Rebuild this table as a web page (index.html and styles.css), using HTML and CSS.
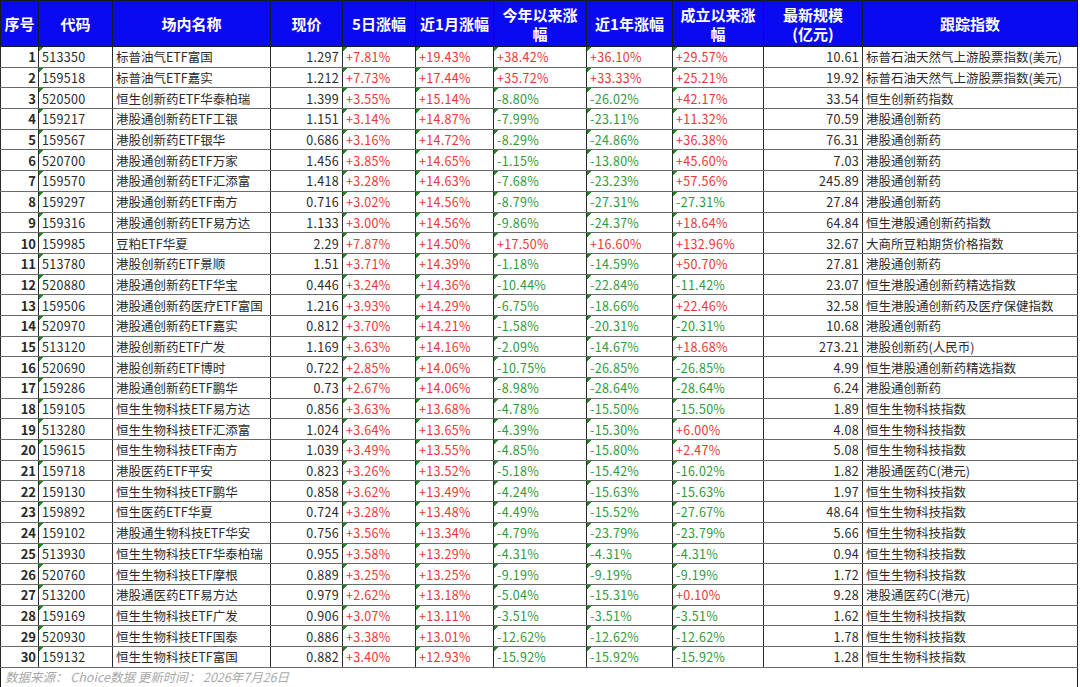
FILE: index.html
```html
<!DOCTYPE html>
<html lang="zh-CN">
<head>
<meta charset="utf-8">
<title>ETF涨幅排行</title>
<link rel="stylesheet" href="styles.css">
</head>
<body>
<table class="sheet">
<colgroup>
<col class="c-no"><col class="c-code"><col class="c-name"><col class="c-price"><col class="c-d5"><col class="c-m1"><col class="c-ytd"><col class="c-y1"><col class="c-all"><col class="c-size"><col class="c-idx">
</colgroup>
<thead>
<tr class="head">
<th>序号</th><th>代码</th><th>场内名称</th><th>现价</th><th>5日涨幅</th><th>近1月涨幅</th><th>今年以来涨<br>幅</th><th>近1年涨幅</th><th>成立以来涨<br>幅</th><th>最新规模<br>(亿元)</th><th>跟踪指数</th>
</tr>
</thead>
<tbody>
<tr><td class="no">1</td><td class="tx t">513350</td><td class="tx">标普油气ETF富国</td><td class="num">1.297</td><td class="t up">+7.81%</td><td class="t up">+19.43%</td><td class="t up">+38.42%</td><td class="t up">+36.10%</td><td class="t up">+29.57%</td><td class="num">10.61</td><td class="tx">标普石油天然气上游股票指数(美元)</td></tr>
<tr><td class="no">2</td><td class="tx t">159518</td><td class="tx">标普油气ETF嘉实</td><td class="num">1.212</td><td class="t up">+7.73%</td><td class="t up">+17.44%</td><td class="t up">+35.72%</td><td class="t up">+33.33%</td><td class="t up">+25.21%</td><td class="num">19.92</td><td class="tx">标普石油天然气上游股票指数(美元)</td></tr>
<tr><td class="no">3</td><td class="tx t">520500</td><td class="tx">恒生创新药ETF华泰柏瑞</td><td class="num">1.399</td><td class="t up">+3.55%</td><td class="t up">+15.14%</td><td class="t dn">-8.80%</td><td class="t dn">-26.02%</td><td class="t up">+42.17%</td><td class="num">33.54</td><td class="tx">恒生创新药指数</td></tr>
<tr><td class="no">4</td><td class="tx t">159217</td><td class="tx">港股通创新药ETF工银</td><td class="num">1.151</td><td class="t up">+3.14%</td><td class="t up">+14.87%</td><td class="t dn">-7.99%</td><td class="t dn">-23.11%</td><td class="t up">+11.32%</td><td class="num">70.59</td><td class="tx">港股通创新药</td></tr>
<tr><td class="no">5</td><td class="tx t">159567</td><td class="tx">港股创新药ETF银华</td><td class="num">0.686</td><td class="t up">+3.16%</td><td class="t up">+14.72%</td><td class="t dn">-8.29%</td><td class="t dn">-24.86%</td><td class="t up">+36.38%</td><td class="num">76.31</td><td class="tx">港股通创新药</td></tr>
<tr><td class="no">6</td><td class="tx t">520700</td><td class="tx">港股通创新药ETF万家</td><td class="num">1.456</td><td class="t up">+3.85%</td><td class="t up">+14.65%</td><td class="t dn">-1.15%</td><td class="t dn">-13.80%</td><td class="t up">+45.60%</td><td class="num">7.03</td><td class="tx">港股通创新药</td></tr>
<tr><td class="no">7</td><td class="tx t">159570</td><td class="tx">港股通创新药ETF汇添富</td><td class="num">1.418</td><td class="t up">+3.28%</td><td class="t up">+14.63%</td><td class="t dn">-7.68%</td><td class="t dn">-23.23%</td><td class="t up">+57.56%</td><td class="num">245.89</td><td class="tx">港股通创新药</td></tr>
<tr><td class="no">8</td><td class="tx t">159297</td><td class="tx">港股通创新药ETF南方</td><td class="num">0.716</td><td class="t up">+3.02%</td><td class="t up">+14.56%</td><td class="t dn">-8.79%</td><td class="t dn">-27.31%</td><td class="t dn">-27.31%</td><td class="num">27.84</td><td class="tx">港股通创新药</td></tr>
<tr><td class="no">9</td><td class="tx t">159316</td><td class="tx">港股通创新药ETF易方达</td><td class="num">1.133</td><td class="t up">+3.00%</td><td class="t up">+14.56%</td><td class="t dn">-9.86%</td><td class="t dn">-24.37%</td><td class="t up">+18.64%</td><td class="num">64.84</td><td class="tx">恒生港股通创新药指数</td></tr>
<tr><td class="no">10</td><td class="tx t">159985</td><td class="tx">豆粕ETF华夏</td><td class="num">2.29</td><td class="t up">+7.87%</td><td class="t up">+14.50%</td><td class="t up">+17.50%</td><td class="t up">+16.60%</td><td class="t up">+132.96%</td><td class="num">32.67</td><td class="tx">大商所豆粕期货价格指数</td></tr>
<tr><td class="no">11</td><td class="tx t">513780</td><td class="tx">港股创新药ETF景顺</td><td class="num">1.51</td><td class="t up">+3.71%</td><td class="t up">+14.39%</td><td class="t dn">-1.18%</td><td class="t dn">-14.59%</td><td class="t up">+50.70%</td><td class="num">27.81</td><td class="tx">港股通创新药</td></tr>
<tr><td class="no">12</td><td class="tx t">520880</td><td class="tx">港股通创新药ETF华宝</td><td class="num">0.446</td><td class="t up">+3.24%</td><td class="t up">+14.36%</td><td class="t dn">-10.44%</td><td class="t dn">-22.84%</td><td class="t dn">-11.42%</td><td class="num">23.07</td><td class="tx">恒生港股通创新药精选指数</td></tr>
<tr><td class="no">13</td><td class="tx t">159506</td><td class="tx">港股通创新药医疗ETF富国</td><td class="num">1.216</td><td class="t up">+3.93%</td><td class="t up">+14.29%</td><td class="t dn">-6.75%</td><td class="t dn">-18.66%</td><td class="t up">+22.46%</td><td class="num">32.58</td><td class="tx">恒生港股通创新药及医疗保健指数</td></tr>
<tr><td class="no">14</td><td class="tx t">520970</td><td class="tx">港股通创新药ETF嘉实</td><td class="num">0.812</td><td class="t up">+3.70%</td><td class="t up">+14.21%</td><td class="t dn">-1.58%</td><td class="t dn">-20.31%</td><td class="t dn">-20.31%</td><td class="num">10.68</td><td class="tx">港股通创新药</td></tr>
<tr><td class="no">15</td><td class="tx t">513120</td><td class="tx">港股创新药ETF广发</td><td class="num">1.169</td><td class="t up">+3.63%</td><td class="t up">+14.16%</td><td class="t dn">-2.09%</td><td class="t dn">-14.67%</td><td class="t up">+18.68%</td><td class="num">273.21</td><td class="tx">港股创新药(人民币)</td></tr>
<tr><td class="no">16</td><td class="tx t">520690</td><td class="tx">港股创新药ETF博时</td><td class="num">0.722</td><td class="t up">+2.85%</td><td class="t up">+14.06%</td><td class="t dn">-10.75%</td><td class="t dn">-26.85%</td><td class="t dn">-26.85%</td><td class="num">4.99</td><td class="tx">恒生港股通创新药精选指数</td></tr>
<tr><td class="no">17</td><td class="tx t">159286</td><td class="tx">港股通创新药ETF鹏华</td><td class="num">0.73</td><td class="t up">+2.67%</td><td class="t up">+14.06%</td><td class="t dn">-8.98%</td><td class="t dn">-28.64%</td><td class="t dn">-28.64%</td><td class="num">6.24</td><td class="tx">港股通创新药</td></tr>
<tr><td class="no">18</td><td class="tx t">159105</td><td class="tx">恒生生物科技ETF易方达</td><td class="num">0.856</td><td class="t up">+3.63%</td><td class="t up">+13.68%</td><td class="t dn">-4.78%</td><td class="t dn">-15.50%</td><td class="t dn">-15.50%</td><td class="num">1.89</td><td class="tx">恒生生物科技指数</td></tr>
<tr><td class="no">19</td><td class="tx t">513280</td><td class="tx">恒生生物科技ETF汇添富</td><td class="num">1.024</td><td class="t up">+3.64%</td><td class="t up">+13.65%</td><td class="t dn">-4.39%</td><td class="t dn">-15.30%</td><td class="t up">+6.00%</td><td class="num">4.08</td><td class="tx">恒生生物科技指数</td></tr>
<tr><td class="no">20</td><td class="tx t">159615</td><td class="tx">恒生生物科技ETF南方</td><td class="num">1.039</td><td class="t up">+3.49%</td><td class="t up">+13.55%</td><td class="t dn">-4.85%</td><td class="t dn">-15.80%</td><td class="t up">+2.47%</td><td class="num">5.08</td><td class="tx">恒生生物科技指数</td></tr>
<tr><td class="no">21</td><td class="tx t">159718</td><td class="tx">港股医药ETF平安</td><td class="num">0.823</td><td class="t up">+3.26%</td><td class="t up">+13.52%</td><td class="t dn">-5.18%</td><td class="t dn">-15.42%</td><td class="t dn">-16.02%</td><td class="num">1.82</td><td class="tx">港股通医药C(港元)</td></tr>
<tr><td class="no">22</td><td class="tx t">159130</td><td class="tx">恒生生物科技ETF鹏华</td><td class="num">0.858</td><td class="t up">+3.62%</td><td class="t up">+13.49%</td><td class="t dn">-4.24%</td><td class="t dn">-15.63%</td><td class="t dn">-15.63%</td><td class="num">1.97</td><td class="tx">恒生生物科技指数</td></tr>
<tr><td class="no">23</td><td class="tx t">159892</td><td class="tx">恒生医药ETF华夏</td><td class="num">0.724</td><td class="t up">+3.28%</td><td class="t up">+13.48%</td><td class="t dn">-4.49%</td><td class="t dn">-15.52%</td><td class="t dn">-27.67%</td><td class="num">48.64</td><td class="tx">恒生生物科技指数</td></tr>
<tr><td class="no">24</td><td class="tx t">159102</td><td class="tx">港股通生物科技ETF华安</td><td class="num">0.756</td><td class="t up">+3.56%</td><td class="t up">+13.34%</td><td class="t dn">-4.79%</td><td class="t dn">-23.79%</td><td class="t dn">-23.79%</td><td class="num">5.66</td><td class="tx">恒生生物科技指数</td></tr>
<tr><td class="no">25</td><td class="tx t">513930</td><td class="tx">恒生生物科技ETF华泰柏瑞</td><td class="num">0.955</td><td class="t up">+3.58%</td><td class="t up">+13.29%</td><td class="t dn">-4.31%</td><td class="t dn">-4.31%</td><td class="t dn">-4.31%</td><td class="num">0.94</td><td class="tx">恒生生物科技指数</td></tr>
<tr><td class="no">26</td><td class="tx t">520760</td><td class="tx">恒生生物科技ETF摩根</td><td class="num">0.889</td><td class="t up">+3.25%</td><td class="t up">+13.25%</td><td class="t dn">-9.19%</td><td class="t dn">-9.19%</td><td class="t dn">-9.19%</td><td class="num">1.72</td><td class="tx">恒生生物科技指数</td></tr>
<tr><td class="no">27</td><td class="tx t">513200</td><td class="tx">港股通医药ETF易方达</td><td class="num">0.979</td><td class="t up">+2.62%</td><td class="t up">+13.18%</td><td class="t dn">-5.04%</td><td class="t dn">-15.31%</td><td class="t up">+0.10%</td><td class="num">9.28</td><td class="tx">港股通医药C(港元)</td></tr>
<tr><td class="no">28</td><td class="tx t">159169</td><td class="tx">恒生生物科技ETF广发</td><td class="num">0.906</td><td class="t up">+3.07%</td><td class="t up">+13.11%</td><td class="t dn">-3.51%</td><td class="t dn">-3.51%</td><td class="t dn">-3.51%</td><td class="num">1.62</td><td class="tx">恒生生物科技指数</td></tr>
<tr><td class="no">29</td><td class="tx t">520930</td><td class="tx">恒生生物科技ETF国泰</td><td class="num">0.886</td><td class="t up">+3.38%</td><td class="t up">+13.01%</td><td class="t dn">-12.62%</td><td class="t dn">-12.62%</td><td class="t dn">-12.62%</td><td class="num">1.78</td><td class="tx">恒生生物科技指数</td></tr>
<tr><td class="no">30</td><td class="tx t">159132</td><td class="tx">恒生生物科技ETF富国</td><td class="num">0.882</td><td class="t up">+3.40%</td><td class="t up">+12.93%</td><td class="t dn">-15.92%</td><td class="t dn">-15.92%</td><td class="t dn">-15.92%</td><td class="num">1.28</td><td class="tx">恒生生物科技指数</td></tr>
</tbody>
<tfoot>
<tr><td class="foot" colspan="11">数据来源： Choice数据 更新时间： 2026年7月26日</td></tr>
</tfoot>
</table>
</body>
</html>
```

FILE: styles.css
```css
html, body {
  margin: 0;
  padding: 0;
  background: #ffffff;
}

.sheet {
  border-collapse: collapse;
  table-layout: fixed;
  width: 1077px;
  font-family: "Noto Sans CJK SC", "Microsoft YaHei", sans-serif;
  font-size: 12.5px;
  color: #2a2a2a;
}

.c-no { width: 38px; }
.c-code { width: 74px; }
.c-name { width: 158px; }
.c-price { width: 72px; }
.c-d5 { width: 73px; }
.c-m1 { width: 78px; }
.c-ytd { width: 93px; }
.c-y1 { width: 86px; }
.c-all { width: 91px; }
.c-size { width: 99px; }
.c-idx { width: 215px; }

.head th {
  background: #0a0af0;
  color: #ffffff;
  font-weight: bold;
  font-size: 15px;
  line-height: 19px;
  height: 45px;
  padding: 0;
  border: 1px solid #1a1a1a;
  text-align: center;
  vertical-align: middle;
}

tbody td {
  height: 20.7px;
  padding: 0 3px;
  line-height: 17px;
  border-left: 1px solid #2a2a2a;
  border-right: 1px solid #2a2a2a;
  border-top: 1px solid #6a6a6a;
  border-bottom: 1px solid #6a6a6a;
  white-space: nowrap;
  overflow: hidden;
  box-sizing: border-box;
  vertical-align: middle;
}

.no {
  text-align: right;
  font-weight: bold;
  font-size: 13px;
  padding-right: 2px;
}

.tx { text-align: left; }

.num {
  text-align: right;
  letter-spacing: 0.3px;
}

.tx.t, .up, .dn { letter-spacing: 0.3px; }

.t {
  background-image: linear-gradient(135deg, #1c8a1c 3px, rgba(0, 0, 0, 0) 3px);
  background-repeat: no-repeat;
  background-size: 5px 5px;
  background-position: 0 0;
}

.up { color: #ef3535; }
.dn { color: #2f9a3c; }

.foot {
  height: 19px;
  padding: 0 4px;
  font-style: italic;
  color: #a8a8a8;
  font-size: 12.5px;
  line-height: 16px;
  border: 1px solid #1a1a1a;
}
```
